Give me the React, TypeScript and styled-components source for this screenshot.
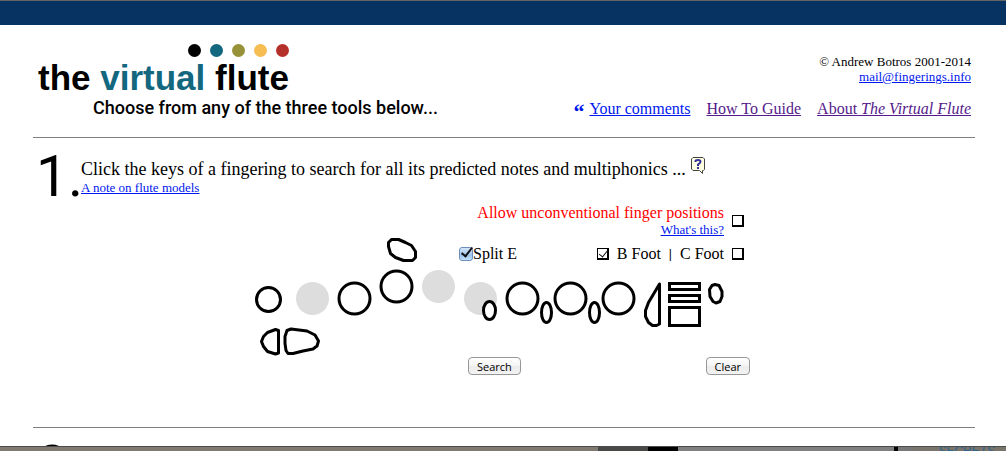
import React from "react";
import styled, { createGlobalStyle } from "styled-components";

const serif = '"Liberation Serif", "Times New Roman", serif';
const display = 'Roboto, "Liberation Sans", sans-serif';

const GlobalStyle = createGlobalStyle`
  *, *::before, *::after { box-sizing: border-box; }
  body {
    margin: 0;
    background: #fff;
    color: #000;
    font-family: ${serif};
    font-size: 16px;
    line-height: 18px;
  }
  h1, h2, p { margin: 0; font-weight: normal; }
`;

const TopBar = styled.div`
  height: 25px;
  background: #063362;
  border-top: 1px solid #666;
`;

const Content = styled.main`
  padding: 0 31px 0 33px;
`;

const Header = styled.header`
  display: flex;
  justify-content: space-between;
  height: 113px;
  padding: 19px 4px 0 5px;
  border-bottom: 1px solid #808080;
`;

const Brand = styled.div`
  display: flex;
  flex-direction: column;
`;

const Dots = styled.div`
  display: flex;
  gap: 9px;
  padding-left: 150px;
`;

const Dot = styled.span<{ $color: string }>`
  width: 13px;
  height: 13px;
  border-radius: 50%;
  background: ${(p) => p.$color};
`;

const Title = styled.h1`
  font: bold 35px/42px "Liberation Sans", Arial, sans-serif;
  white-space: nowrap;
  em {
    font-style: normal;
    color: #13677f;
  }
`;

const Tagline = styled.p`
  padding-left: 55px;
  font: 500 18px/18px ${display};
  white-space: nowrap;
`;

const Side = styled.div`
  display: flex;
  flex-direction: column;
  align-items: flex-end;
  gap: 15px;
  padding-top: 10px;
`;

const Credit = styled.p`
  font-size: 13px;
  line-height: 15px;
  text-align: right;
`;

const Nav = styled.nav`
  display: flex;
  gap: 16px;
  padding-top: 1px;
  white-space: nowrap;
`;

const Comments = styled.span`
  display: flex;
  gap: 5px;
`;

const Link = styled.a<{ $visited?: boolean; $small?: boolean }>`
  color: ${(p) => (p.$visited ? "#551a8b" : "#0018ee")};
  font-size: ${(p) => (p.$small ? 13 : 16)}px;
  line-height: ${(p) => (p.$small ? 15 : 18)}px;
`;

const Quote = styled.span`
  color: #0018ee;
  font-size: 22px;
  line-height: 24px;
  height: 18px;
  font-weight: bold;
`;

const Tool = styled.section`
  height: 290px;
  border-bottom: 1px solid #808080;
`;

const ToolHeading = styled.div`
  display: flex;
  height: 67px;
  padding: 11px 0 0 3px;
`;

const Numeral = styled.div`
  width: 45px;
  font: 57px/56px ${display};
  white-space: nowrap;
`;

const Intro = styled.div`
  display: flex;
  flex-direction: column;
  align-items: flex-start;
  padding-top: 7px;
`;

const Prompt = styled.h2`
  display: flex;
  gap: 5px;
  font-size: 18px;
  line-height: 26px;
  height: 24px;
`;

const HelpButton = styled.button`
  display: block;
  height: 20px;
  padding: 1px 0;
  border: 0;
  background: none;
  svg { display: block; }
`;

const Panel = styled.form`
  display: grid;
  grid-template-columns: 1fr;
  grid-template-rows: 31px 30px 91px auto;
  width: 500px;
  margin: 0 auto;
`;

const AllowRow = styled.div`
  display: flex;
  justify-content: flex-end;
  align-items: center;
  gap: 8px;
  padding-right: 10px;
`;

const AllowText = styled.div`
  display: flex;
  flex-direction: column;
  align-items: flex-end;
  color: #f00;
`;

const OptionRow = styled.div`
  z-index: 1;
  grid-area: 2 / 1;
  display: flex;
  justify-content: space-between;
  padding: 6px 10px 0 205px;
`;

const OptionGroup = styled.div`
  display: flex;
  align-items: center;
  gap: 8px;
`;

const Divider = styled.span`
  font: 12px/18px "Liberation Sans", Arial, sans-serif;
`;

const Option = styled.label<{ $gap: number }>`
  display: flex;
  align-items: center;
  gap: ${(p) => p.$gap}px;
`;

const Tick = styled.input<{ $native?: boolean }>`
  appearance: none;
  width: ${(p) => (p.$native ? 14 : 12)}px;
  height: ${(p) => (p.$native ? 14 : 12)}px;
  margin: 0;
  border: ${(p) => (p.$native ? "1px solid #6f8fbb" : "solid #000")};
  border-width: ${(p) => (p.$native ? "1px" : "1px 2px 2px 1px")};
  border-radius: ${(p) => (p.$native ? 3 : 0)}px;
  background: ${(p) => (p.$native ? "linear-gradient(#d5e6f8, #9cc4ee 60%, #c5e2fa)" : "#fff")};
  &:checked::after {
    content: "";
    display: block;
    width: ${(p) => (p.$native ? 6 : 5)}px;
    height: ${(p) => (p.$native ? 12 : 9)}px;
    margin: ${(p) => (p.$native ? "-3px 0 0 4px" : "-1px 0 0 3px")};
    border: solid #111;
    border-width: ${(p) => (p.$native ? "0 2px 2px 0" : "0 1px 1px 0")};
    transform: rotate(38deg);
  }
`;

const Diagram = styled.svg`
  display: block;
  grid-area: 2 / 1 / 4 / 2;
  fill: #fff;
  stroke: #000;
  stroke-width: 3;
  stroke-linejoin: round;
  .pressed { fill: #ddd; stroke: none; }
`;

const Actions = styled.div`
  display: flex;
  justify-content: space-between;
  padding: 0 4px 0 214px;
`;

const PushButton = styled.button`
  height: 18px;
  padding: 0 8px;
  border: 1px solid #979797;
  border-radius: 4px;
  background: linear-gradient(#fff, #f4f4f4 50%, #ebebeb 51%, #f3f3f3);
  color: #000;
  font: 11px/15px "Open Sans", "Noto Sans", sans-serif;
`;

const NextTool = styled.section`
  height: 18px;
  padding: 11px 0 0 3px;
  overflow: hidden;
`;

const Desktop = styled.footer`
  display: flex;
  height: 5px;
  border-top: 1px solid #4c4c4c;
  overflow: hidden;
`;

const Strip = styled.div<{ $grow: number; $fill: string }>`
  flex: ${(p) => p.$grow} 1 0;
  min-width: 0;
  background: ${(p) => p.$fill};
`;

const Poster = styled(Strip)`
  color: #2d6390;
  font: italic 12px/8px "Liberation Sans", sans-serif;
  text-align: center;
  text-indent: 14px;
`;

const dots = ["#000", "#13677f", "#979237", "#f5bd52", "#b5302b"];

function HelpIcon() {
  return (
    <svg width="15" height="18" viewBox="0 0 15 18" aria-hidden="true">
      <path d="M2 .5h10l1.500 1.500v10.500l-1 1h-1v3l-3-3H2L.5 12V2z" fill="#ffffe4" stroke="#444" />
      <path d="M4.500 5V4q0-1 2.500-1t2.500 1.500q0 1.500-2.500 3v1.500M7 10v2" fill="none" stroke="#33339a" strokeWidth="2" />
    </svg>
  );
}

function FluteKeys() {
  return (
    <Diagram width="500" height="120" viewBox="254 236 500 120" role="img" aria-label="Flute keys">
      <circle cx="268.500" cy="299.500" r="12" />
      <circle className="pressed" cx="312.500" cy="298.500" r="16.500" />
      <circle cx="354.500" cy="298.500" r="15.500" />
      <circle cx="396.500" cy="286.500" r="15.500" />
      <circle className="pressed" cx="438.500" cy="286.500" r="16.500" />
      <circle className="pressed" cx="480.500" cy="298.500" r="16.500" />
      <path d="M391.500 239.500h7l7 3 6 3 4 6v6l-3 3h-9l-8-3-5-4-2-7v-4z" />
      <path d="M278.500 330.500l-3-1-8 3-4 4-2 5 2 5 4 5 8 2.500 3-1V330.500z" />
      <path d="M287 330.500l4-1.500 16 2 8 4 3.500 6-1.500 5-4 3-10 2-10 2.500h-5l-2-3-1-7v-7z" />
      <ellipse cx="489.500" cy="310.500" rx="6" ry="9" />
      <circle cx="522.500" cy="298.500" r="15.500" />
      <ellipse cx="546.500" cy="312.500" rx="5" ry="10" />
      <circle cx="570.500" cy="298.500" r="15.500" />
      <ellipse cx="594.500" cy="312.500" rx="5" ry="10" />
      <circle cx="618.500" cy="298.500" r="15.500" />
      <path d="M659.500 284v40l-3 1.500h-4l-4-3-3-6v-6l3-8z" />
      <g strokeLinejoin="miter">
        <rect x="669.500" y="283.500" width="30" height="6" />
        <rect x="669.500" y="295.500" width="30" height="6" />
        <rect x="669.500" y="307.500" width="30" height="18" />
      </g>
      <path d="M712 285.500l3-1 4 1 3 6v5l-2 5-4 1.500-3-1.500-3-5-.500-7z" />
    </Diagram>
  );
}

export default function App() {
  return (
    <>
      <GlobalStyle />
      <TopBar />
      <Content>
        <Header>
          <Brand>
            <Dots>
              {dots.map((c) => (
                <Dot key={c} $color={c} />
              ))}
            </Dots>
            <Title>
              the <em>virtual</em> flute
            </Title>
            <Tagline>Choose from any of the three tools below...</Tagline>
          </Brand>
          <Side>
            <Credit>
              © Andrew Botros 2001-2014
              <br />
              <Link $small href="mailto:mail@fingerings.info">mail@fingerings.info</Link>
            </Credit>
            <Nav>
              <Comments>
                <Quote>“</Quote>
                <Link href="#comments">Your comments</Link>
              </Comments>
              <Link $visited href="#guide">How To Guide</Link>
              <Link $visited href="#about">
                About <i>The Virtual Flute</i>
              </Link>
            </Nav>
          </Side>
        </Header>

        <Tool>
          <ToolHeading>
            <Numeral>1.</Numeral>
            <Intro>
              <Prompt>
                Click the keys of a fingering to search for all its predicted notes and multiphonics ...
                <HelpButton type="button" aria-label="Help">
                  <HelpIcon />
                </HelpButton>
              </Prompt>
              <Link $small href="#models">A note on flute models</Link>
            </Intro>
          </ToolHeading>

          <Panel onSubmit={(e) => e.preventDefault()}>
            <AllowRow>
              <AllowText>
                <label htmlFor="allow">Allow unconventional finger positions</label>
                <Link $small href="#unconventional">What's this?</Link>
              </AllowText>
              <Tick id="allow" type="checkbox" />
            </AllowRow>
            <OptionRow>
              <Option $gap={0}>
                <Tick $native type="checkbox" defaultChecked />
                Split E
              </Option>
              <OptionGroup>
                <Option $gap={8}>
                  <Tick type="checkbox" defaultChecked />
                  B Foot
                </Option>
                <Divider>|</Divider>
                <Option $gap={8}>
                  C Foot
                  <Tick type="checkbox" />
                </Option>
              </OptionGroup>
            </OptionRow>
            <FluteKeys />
            <Actions>
              <PushButton type="submit">Search</PushButton>
              <PushButton type="reset">Clear</PushButton>
            </Actions>
          </Panel>
        </Tool>

        <NextTool>
          <Numeral>2.</Numeral>
        </NextTool>
      </Content>
      <Desktop>
        <Strip $grow={598} $fill="#807a70" />
        <Strip $grow={50} $fill="#494a47" />
        <Strip $grow={30} $fill="#000" />
        <Strip $grow={216} $fill="#808080" />
        <Strip $grow={4} $fill="#000" />
        <Strip $grow={15} $fill="#777" />
        <Poster $grow={93} $fill="#7a756c">SECRETS</Poster>
      </Desktop>
    </>
  );
}
